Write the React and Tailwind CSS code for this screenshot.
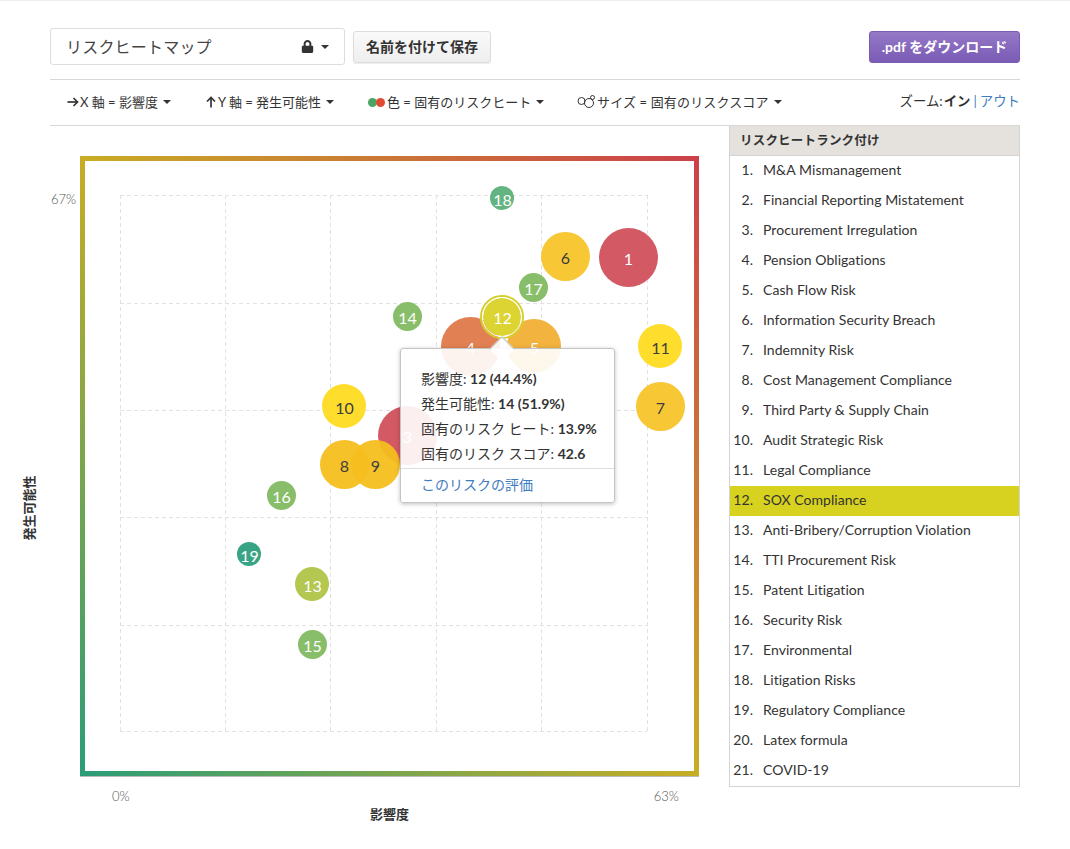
import React from "react";
import { FaLock } from "react-icons/fa";

const FONT = "font-['Lato','Noto_Sans_CJK_JP','Noto_Sans',sans-serif]";

const risks = [
  "M&A Mismanagement",
  "Financial Reporting Mistatement",
  "Procurement Irregulation",
  "Pension Obligations",
  "Cash Flow Risk",
  "Information Security Breach",
  "Indemnity Risk",
  "Cost Management Compliance",
  "Third Party & Supply Chain",
  "Audit Strategic Risk",
  "Legal Compliance",
  "SOX Compliance",
  "Anti-Bribery/Corruption Violation",
  "TTI Procurement Risk",
  "Patent Litigation",
  "Security Risk",
  "Environmental",
  "Litigation Risks",
  "Regulatory Compliance",
  "Latex formula",
  "COVID-19",
];

// x, y are the bubble centre in page pixels
const bubbles = [
  { n: 1, x: 628, y: 257, d: 59, bg: "#d1525c", light: true },
  { n: 6, x: 565, y: 256, d: 49, bg: "#f8c52b" },
  { n: 18, x: 502, y: 198, d: 24, bg: "#5bb07a", light: true },
  { n: 17, x: 533, y: 287, d: 29, bg: "#82bb62", light: true },
  { n: 14, x: 407, y: 316, d: 29, bg: "#82bb62", light: true },
  { n: 4, x: 470, y: 346, d: 59, bg: "#e07b4a", light: true },
  { n: 5, x: 534, y: 346, d: 54, bg: "#f2b035", light: true },
  { n: 11, x: 660, y: 346, d: 44, bg: "#ffdc22" },
  { n: 7, x: 660, y: 406, d: 49, bg: "#f8c52b" },
  { n: 10, x: 344, y: 406, d: 44, bg: "#ffdc22" },
  { n: 3, x: 407, y: 435, d: 59, bg: "#d1525c", light: true },
  { n: 8, x: 344, y: 464, d: 49, bg: "#f6bf1f" },
  { n: 9, x: 375, y: 464, d: 49, bg: "#f6bf1f" },
  { n: 16, x: 281, y: 495, d: 29, bg: "#82bb62", light: true },
  { n: 19, x: 249, y: 554, d: 24, bg: "#2f9f80", light: true },
  { n: 13, x: 312, y: 584, d: 34, bg: "#b0c548", light: true },
  { n: 15, x: 312, y: 644, d: 29, bg: "#82bb62", light: true },
];

const gridX = [120, 225, 330, 436, 541, 647];
const gridY = [195, 303, 410, 517, 625, 731];

function Caret() {
  return (
    <span className="ml-[5px] inline-block h-0 w-0 border-x-[4px] border-t-[4px] border-x-transparent border-t-[#333] align-middle" />
  );
}

function ArrowIcon({ up }) {
  return (
    <svg width="12" height="12" viewBox="0 0 12 12" className="mr-[1px]">
      <g transform={up ? "rotate(-90 6 6)" : undefined} fill="none" stroke="#333" strokeWidth="1.7">
        <path d="M0.5 6H10.5" />
        <path d="M6.5 2L10.5 6L6.5 10" />
      </g>
    </svg>
  );
}

function SizeIcon() {
  return (
    <svg width="19" height="14" viewBox="0 0 19 14" className="mr-[1px]" fill="none" stroke="#333" strokeWidth="1">
      <circle cx="4.5" cy="6" r="3.5" />
      <circle cx="12" cy="8" r="4.5" />
      <circle cx="15.5" cy="2.5" r="2" />
    </svg>
  );
}

function ToolItem({ icon, label, className }) {
  return (
    <div className={"flex items-center text-[13px] leading-none text-[#333] " + className}>
      {icon}
      <span>{label}</span>
      <Caret />
    </div>
  );
}

function Tooltip() {
  return (
    <div className="absolute left-[350px] top-[222px] z-20 h-[155px] w-[215px] rounded-[3px] border border-[#c4c4c4] bg-white/90 shadow-[0_1px_4px_rgba(0,0,0,0.25)]">
      <div className="absolute -top-[9px] left-[92px] h-[18px] w-[18px] rotate-45 border-l border-t border-[#c4c4c4] bg-white/90" />
      <div className="pl-5 pt-[17px] text-[14px] leading-[25px] whitespace-nowrap text-[#333]">
        <p>影響度: <b className="font-bold">12 (44.4%)</b></p>
        <p>発生可能性: <b className="font-bold">14 (51.9%)</b></p>
        <p>固有のリスク ヒート: <b className="font-bold">13.9%</b></p>
        <p>固有のリスク スコア: <b className="font-bold">42.6</b></p>
      </div>
      <div className="mt-[2px] border-t border-[#ddd] px-5 pt-[3px] text-[14px] leading-[25px] text-[#3f7cc0]">
        このリスクの評価
      </div>
    </div>
  );
}

function Chart() {
  return (
    <div className="relative h-[720px] w-[679px]">
      {/* gradient frame */}
      <div className="ml-[30px] mt-[30px] h-[620px] w-[619px] bg-[linear-gradient(to_top_right,#2a9d78,#c8ad24,#cc3f4a)] p-[5px] shadow-[0_1px_0_#bbb]">
        <div className="h-full w-full bg-white" />
      </div>

      <svg className="absolute left-0 top-0" width="679" height="720" fill="none" stroke="#e2e2e2" strokeDasharray="4 3">
        {gridX.map((x) => (
          <line key={x} x1={x - 49.5} x2={x - 49.5} y1={gridY[0] - 126} y2={gridY[5] - 126} />
        ))}
        {gridY.map((y) => (
          <line key={y} x1={gridX[0] - 50} x2={gridX[5] - 50} y1={y - 125.5} y2={y - 125.5} />
        ))}
      </svg>

      {bubbles.map((b) => (
        <div
          key={b.n}
          className={"absolute flex items-center justify-center rounded-full pl-[1px] pt-[4px] text-[16px] leading-none opacity-95 " + (b.light ? "text-white" : "text-[#333]")}
          style={{ left: b.x - 50 - b.d / 2, top: b.y - 126 - b.d / 2, width: b.d, height: b.d, backgroundColor: b.bg }}
        >
          {b.n}
        </div>
      ))}

      {/* selected bubble */}
      <div className="absolute left-[430px] top-[169px] z-10 flex h-[44px] w-[44px] items-center justify-center rounded-full border-2 border-[#d4cf2a]">
        <div className="flex h-[38px] w-[38px] items-center justify-center rounded-full bg-[#dbd433] pl-[1px] pt-[1px] text-[16px] leading-none text-white outline-1 outline-white">
          12
        </div>
      </div>

      <Tooltip />

      <span className="absolute left-[1px] top-[67px] text-[13px] leading-none font-light text-[#555]">67%</span>
      <span className="absolute left-[-61px] top-[372px] w-[80px] -rotate-90 text-center text-[13px] leading-[20px] font-bold text-[#333]">発生可能性</span>

      <div className="relative ml-[62px] mt-[12px] flex w-[567px] justify-between text-[13px] leading-[16px] font-light text-[#555]">
        <span>0%</span>
        <span>63%</span>
      </div>
      <p className="ml-[320px] mt-[1px] text-[13px] leading-[18px] font-bold text-[#333]">影響度</p>
    </div>
  );
}

function Ranking() {
  return (
    <div className="h-[661px] w-[291px] border border-t-0 border-[#d4d4d4]">
      <div className="flex h-[30px] items-center border-b border-[#d4d4d4] bg-[#e5e2de] pl-[10px] pt-[1px] text-[12.5px] font-bold tracking-[0.2px] text-[#333]">
        リスクヒートランク付け
      </div>
      <ol>
        {risks.map((r, i) => (
          <li
            key={r}
            className={"flex h-[30px] items-center pb-[3px] text-[14px] tracking-[0.04px] text-[#333] " + (i === 11 ? "bg-[#d7d11f]" : "")}
          >
            <span className="w-[23px] text-right">{i + 1}.</span>
            <span className="ml-[10px]">{r}</span>
          </li>
        ))}
      </ol>
    </div>
  );
}

export default function App() {
  return (
    <div className={"min-h-[849px] w-[1070px] border-t border-[#eee] bg-white px-[50px] pt-[27px] text-[#333] " + FONT}>
      <div className="flex h-[37px] items-center">
        <div className="flex h-[37px] w-[295px] items-center rounded-[3px] border border-[#ddd] pl-[15px] pr-[15px] text-[16px] text-[#444]">
          <span className="flex-1 pt-[1px] tracking-[0.2px]">リスクヒートマップ</span>
          <FaLock className="mr-[2px] text-[13px] text-[#333]" />
          <Caret />
        </div>
        <button className="ml-[8px] h-[32px] w-[138px] rounded-[3px] border border-[#ddd] bg-[linear-gradient(#fafafa,#eeeeee)] text-[14px] font-bold text-[#333] shadow-[0_1px_1px_rgba(0,0,0,0.08)]">
          名前を付けて保存
        </button>
        <button className="ml-auto h-[32px] w-[151px] rounded-[3px] border border-[#7a5bb5] bg-[linear-gradient(#9478c6,#7a5bb5)] text-[14px] font-bold text-white">
          .pdf をダウンロード
        </button>
      </div>

      <div className="mt-[14px] flex h-[47px] items-center border-y border-[#d8d8d8] pb-[1px]">
        <ToolItem className="ml-[17px] w-[138px]" icon={<ArrowIcon />} label="X 軸 = 影響度" />
        <ToolItem className="w-[163px]" icon={<ArrowIcon up />} label="Y 軸 = 発生可能性" />
        <ToolItem
          className="w-[209px]"
          icon={
            <span className="mr-[2px] flex">
              <span className="h-[9px] w-[9px] rounded-full bg-[#4aa564]" />
              <span className="-ml-[1px] h-[9px] w-[9px] rounded-full bg-[#e04b32]" />
            </span>
          }
          label="色 = 固有のリスクヒート"
        />
        <ToolItem className="tracking-[0.15px]" icon={<SizeIcon />} label="サイズ = 固有のリスクスコア" />
        <div className="ml-auto flex pb-[1px] text-[13.4px] text-[#333]">
          <span>ズーム:</span>
          <b className="ml-[1px] font-bold">イン</b>
          <span className="ml-[3px] text-[#3f7cc0]">|</span>
          <span className="ml-[3px] text-[#3f7cc0]">アウト</span>
        </div>
      </div>

      <div className="flex items-start">
        <Chart />
        <Ranking />
      </div>
    </div>
  );
}
